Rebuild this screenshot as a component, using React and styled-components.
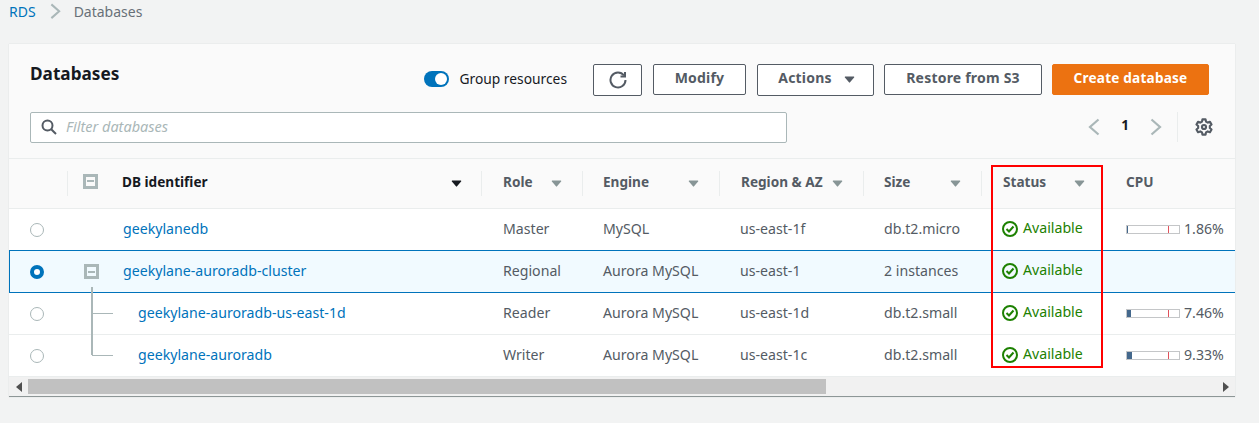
import React from "react";
import styled, { createGlobalStyle } from "styled-components";
import { IoCaretDown } from "react-icons/io5";

const GlobalStyle = createGlobalStyle`
  html, body {
    margin: 0;
    padding: 0;
    background: #f2f3f3;
    font-family: "Noto Sans", "Open Sans", sans-serif;
    font-size: 14px;
    color: #545b64;
  }
`;

const columns = "58px 414px 101px 137px 144px 118px 124px 130px";

const rows = [
  { name: "geekylanedb", role: "Master", engine: "MySQL", region: "us-east-1f", size: "db.t2.micro", cpu: 1.86 },
  { name: "geekylane-auroradb-cluster", role: "Regional", engine: "Aurora MySQL", region: "us-east-1", size: "2 instances", selected: true, parent: true },
  { name: "geekylane-auroradb-us-east-1d", role: "Reader", engine: "Aurora MySQL", region: "us-east-1d", size: "db.t2.small", cpu: 7.46, child: "mid" },
  { name: "geekylane-auroradb", role: "Writer", engine: "Aurora MySQL", region: "us-east-1c", size: "db.t2.small", cpu: 9.33, child: "last" },
];

const Page = styled.div`
  position: relative;
  width: 1259px;
  height: 423px;
  overflow: hidden;
`;

const Breadcrumbs = styled.nav`
  display: flex;
  align-items: center;
  height: 23px;
  padding-left: 9px;
  margin-bottom: 21px;
  font-size: 14px;
  color: #687078;
`;

const Crumb = styled.a`
  color: #0073bb;
`;

const CrumbSeparator = styled.span`
  display: flex;
  margin: 0 13px 0 14px;
`;

const Card = styled.section`
  width: 1226px;
  margin-left: 9px;
  background: #fafafa;
  border-bottom: 1px solid #8d9696;
  box-shadow: 0 0 1px #c8cccc;
`;

const CardHeader = styled.div`
  height: 115px;
  box-sizing: border-box;
  padding: 20px 26px 0 21px;
  border-bottom: 1px solid #eaeded;
`;

const Toolbar = styled.div`
  display: flex;
  align-items: flex-start;
  height: 47px;
`;

const Title = styled.h1`
  flex: 1;
  margin: 0;
  font-size: 17.2px;
  line-height: 20px;
  font-weight: 700;
  color: #16191f;
`;

const ToggleGroup = styled.div`
  display: flex;
  align-items: center;
  height: 28px;
  margin-right: 26px;
  font-size: 13.8px;
  color: #16191f;
`;

const Toggle = styled.span`
  position: relative;
  width: 25px;
  height: 16px;
  margin: 2px 10px 0 0;
  border-radius: 8px;
  background: #0073bb;

  &::after {
    content: "";
    position: absolute;
    right: 2px;
    top: 2px;
    width: 12px;
    height: 12px;
    border-radius: 50%;
    background: #fff;
  }
`;

const Button = styled.button`
  display: flex;
  align-items: center;
  justify-content: center;
  gap: 10px;
  height: ${(p) => (p.$tall ? 32 : 31)}px;
  width: ${(p) => p.$width}px;
  margin-left: ${(p) => p.$gap ?? 11}px;
  padding: 0 0 5px ${(p) => p.$pl ?? 0}px;
  box-sizing: border-box;
  border: 1px solid ${(p) => (p.$primary ? "#ec7211" : "#545b64")};
  border-radius: 2px;
  background: ${(p) => (p.$primary ? "#ec7211" : "#fff")};
  color: ${(p) => (p.$primary ? "#fff" : "#545b64")};
  font-family: inherit;
  font-size: ${(p) => (p.$primary ? 13.6 : 14)}px;
  font-weight: 700;
  letter-spacing: 0.2px;
`;

const RefreshButton = styled(Button)`
  padding: 0;
`;

const FilterRow = styled.div`
  display: flex;
  align-items: center;
  height: 32px;
`;

const FilterBox = styled.div`
  display: flex;
  align-items: center;
  width: 757px;
  height: 31px;
  box-sizing: border-box;
  padding: 0 0 3px 10px;
  border: 1px solid #aab7b8;
  border-radius: 2px;
  background: #fff;
  font-size: 14.5px;
  font-style: italic;
  color: #aab7b8;
  gap: 9px;

  svg {
    margin-top: 3px;
  }
`;

const Pager = styled.div`
  display: flex;
  align-items: center;
  margin: 0 -4px 0 auto;
  height: 32px;
  font-size: 13.5px;
  font-weight: 700;
  color: #16191f;
`;

const PageNumber = styled.span`
  width: 50px;
  padding-bottom: 5px;
  text-align: center;
`;

const PagerDivider = styled.span`
  width: 1px;
  height: 30px;
  margin: 0 17px 0 15px;
  background: #eaeded;
`;

const HeadRow = styled.div`
  display: grid;
  grid-template-columns: ${columns};
  height: 49px;
  border-bottom: 1px solid #eaeded;
  align-items: center;
`;

const HeadCell = styled.div`
  display: flex;
  align-items: center;
  justify-content: space-between;
  height: 25px;
  box-sizing: border-box;
  padding: 0 ${(p) => p.$pr ?? 18}px 5px ${(p) => p.$pl ?? 20}px;
  border-left: ${(p) => (p.$plain ? "none" : "1px solid #eaeded")};
  font-size: 13.6px;
  font-weight: 700;
  color: ${(p) => (p.$active ? "#16191f" : "#545b64")};
`;

const HeadLabel = styled.span`
  display: flex;
  align-items: center;
`;

const CaretSlot = styled.span`
  display: flex;
  margin-top: 4px;
`;

const Row = styled.div`
  display: grid;
  grid-template-columns: ${columns};
  align-items: center;
  height: 41px;
  box-sizing: content-box;
  background: ${(p) => (p.$selected ? "#f1faff" : "#fff")};
  border-bottom: 1px solid ${(p) => (p.$selected ? "#0073bb" : "#eaeded")};
  box-shadow: ${(p) => (p.$selected ? "0 -1px 0 #0073bb, inset 1px 0 0 #0073bb" : "none")};
  position: relative;
  font-size: 14.15px;
  color: #545b64;
`;

const RadioCell = styled.div`
  display: flex;
  padding-left: 21px;
`;

const Radio = styled.span`
  width: 14px;
  height: 14px;
  box-sizing: border-box;
  border-radius: 50%;
  background: #fff;
  border: ${(p) => (p.$on ? "4px solid #0073bb" : "1px solid #aab7b8")};
`;

const NameCell = styled.div`
  position: relative;
  display: flex;
  align-items: center;
  height: 100%;
  padding: 0 0 2px ${(p) => (p.$child ? 71 : 56)}px;
  box-sizing: border-box;
  color: #0073bb;
`;

const Expander = styled.span`
  position: absolute;
  left: 17px;
  top: 13px;
  width: 15px;
  height: 15px;
  box-sizing: border-box;
  border: 3px solid #aab7b8;
  display: flex;
  align-items: center;
  justify-content: center;
  background: #f1faff;

  &::before {
    content: "";
    width: 7px;
    height: 2px;
    background: #aab7b8;
  }
`;

const HeadExpander = styled(Expander)`
  position: static;
  background: #fafafa;
  margin-right: 24px;
`;

const TreeStem = styled.span`
  position: absolute;
  left: 24px;
  top: ${(p) => (p.$last ? -1 : -6)}px;
  height: ${(p) => (p.$last ? 21 : 47)}px;
  width: 2px;
  background: #aab7b8;
`;

const TreeBranch = styled.span`
  position: absolute;
  left: 25px;
  top: 20px;
  width: 21px;
  height: 1px;
  background: #aab7b8;
`;

const Cell = styled.div`
  padding: 0 0 2px ${(p) => p.$pl ?? 21}px;
  white-space: nowrap;
`;

const StatusCell = styled(Cell)`
  display: flex;
  align-items: center;
  gap: 5px;
  padding-bottom: 4px;
  color: #1d8102;
`;

const CpuCell = styled(Cell)`
  display: flex;
  align-items: center;
  gap: 4px;
`;

const CpuBar = styled.span`
  position: relative;
  width: 52px;
  height: 7px;
  margin-top: 2px;
  border: 1px solid #c4c6c8;
  background: #fff;

  &::after {
    content: "";
    position: absolute;
    left: 41px;
    top: 0;
    width: 1px;
    height: 7px;
    background: #e0525c;
  }
`;

const CpuFill = styled.span`
  display: block;
  height: 100%;
  background: #44688c;
`;

const Scrollbar = styled.div`
  display: flex;
  align-items: center;
  height: 19px;
  background: #f1f1f1;
`;

const ScrollArrow = styled.span`
  display: flex;
  justify-content: center;
  width: 19px;
`;

const ScrollThumb = styled.span`
  width: 798px;
  height: 15px;
  background: #c1c1c1;
  margin-right: auto;
`;

const Highlight = styled.div`
  position: absolute;
  left: 991px;
  top: 165px;
  width: 112px;
  height: 203px;
  box-sizing: border-box;
  border: 2px solid #f00;
  pointer-events: none;
`;

const Chevron = ({ dir, color, size = 12 }) => (
  <svg width={size} height={size * 1.5} viewBox="0 0 12 18" fill="none" stroke={color} strokeWidth="2.2">
    <path d={dir === "left" ? "M10.5 1.5 L2 9 L10.5 16.5" : "M1.5 1.5 L10 9 L1.5 16.5"} />
  </svg>
);

const SearchIcon = () => (
  <svg width="16" height="16" viewBox="0 0 16 16" fill="none" stroke="#545b64" strokeWidth="2">
    <circle cx="6.5" cy="6.5" r="5" />
    <path d="M10.2 10.2 L15 15" />
  </svg>
);

const RefreshIcon = () => (
  <svg width="18" height="18" viewBox="0 0 18 18" fill="none" stroke="#545b64" strokeWidth="2">
    <path d="M15 4.5 A7.5 7.5 0 1 0 16.5 9" />
    <path d="M16 1 V5.5 H11.5" />
  </svg>
);

const GearIcon = () => (
  <svg width="18" height="18" viewBox="0 0 16 16" fill="none" stroke="#545b64" strokeWidth="1.9" strokeLinejoin="round">
    <path d="M6.6 1.2 h2.8 l.4 2 1.5.9 2-.7 1.4 2.4-1.5 1.3 v1.8 l1.5 1.3-1.4 2.4-2-.7-1.5.9-.4 2 h-2.8 l-.4-2-1.5-.9-2 .7-1.4-2.4 1.5-1.3 v-1.8 l-1.5-1.3 1.4-2.4 2 .7 1.5-.9z" />
    <circle cx="8" cy="8" r="1.8" />
  </svg>
);

const CheckIcon = () => (
  <svg width="16" height="16" viewBox="0 0 16 16" fill="none" stroke="#1d8102" strokeWidth="2" style={{ marginTop: 3 }}>
    <circle cx="8" cy="8" r="7" />
    <path d="M4.5 8 L7 10.5 L11.5 5.5" />
  </svg>
);

const ArrowLeft = () => (
  <svg width="6" height="10" viewBox="0 0 6 10" fill="#505050">
    <path d="M6 0 V10 L0 5z" />
  </svg>
);

const ArrowRight = () => (
  <svg width="6" height="10" viewBox="0 0 6 10" fill="#505050">
    <path d="M0 0 V10 L6 5z" />
  </svg>
);

const Caret = ({ color = "#879596" }) => (
  <CaretSlot>
    <IoCaretDown size={15} color={color} />
  </CaretSlot>
);

export default function App() {
  return (
    <Page>
      <GlobalStyle />
      <Breadcrumbs>
        <Crumb>RDS</Crumb>
        <CrumbSeparator>
          <Chevron dir="right" color="#aab7b8" size={11} />
        </CrumbSeparator>
        Databases
      </Breadcrumbs>
      <Card>
        <CardHeader>
          <Toolbar>
            <Title>Databases</Title>
            <ToggleGroup>
              <Toggle />
              Group resources
            </ToggleGroup>
            <RefreshButton $width={49} $tall $gap={0}>
              <RefreshIcon />
            </RefreshButton>
            <Button $width={93}>Modify</Button>
            <Button $width={117} $tall $pl={4}>
              Actions
              <Caret color="#545b64" />
            </Button>
            <Button $width={158} $gap={10}>Restore from S3</Button>
            <Button $width={157} $gap={10} $primary>Create database</Button>
          </Toolbar>
          <FilterRow>
            <FilterBox>
              <SearchIcon />
              Filter databases
            </FilterBox>
            <Pager>
              <Chevron dir="left" color="#aab7b8" />
              <PageNumber>1</PageNumber>
              <Chevron dir="right" color="#aab7b8" />
              <PagerDivider />
              <GearIcon />
            </Pager>
          </FilterRow>
        </CardHeader>
        <HeadRow>
          <div />
          <HeadCell $active $pl={15} $pr={17}>
            <HeadLabel>
              <HeadExpander />
              DB identifier
            </HeadLabel>
            <Caret color="#16191f" />
          </HeadCell>
          <HeadCell $pl={21}>Role<Caret /></HeadCell>
          <HeadCell>Engine<Caret /></HeadCell>
          <HeadCell $pl={21}>Region &amp; AZ<Caret /></HeadCell>
          <HeadCell>Size<Caret /></HeadCell>
          <HeadCell $pl={21}>Status<Caret /></HeadCell>
          <HeadCell $plain $pl={21}>CPU</HeadCell>
        </HeadRow>
        {rows.map((r) => (
          <Row key={r.name} $selected={r.selected}>
            <RadioCell>
              <Radio $on={r.selected} />
            </RadioCell>
            <NameCell $child={!!r.child}>
              {r.parent && <Expander />}
              {r.child && <TreeStem $last={r.child === "last"} />}
              {r.child && <TreeBranch />}
              {r.name}
            </NameCell>
            <Cell $pl={22}>{r.role}</Cell>
            <Cell>{r.engine}</Cell>
            <Cell>{r.region}</Cell>
            <Cell>{r.size}</Cell>
            <StatusCell>
              <CheckIcon />
              Available
            </StatusCell>
            {r.cpu ? (
              <CpuCell>
                <CpuBar>
                  <CpuFill style={{ width: `${r.cpu}%` }} />
                </CpuBar>
                {r.cpu}%
              </CpuCell>
            ) : (
              <div />
            )}
          </Row>
        ))}
        <Scrollbar>
          <ScrollArrow><ArrowLeft /></ScrollArrow>
          <ScrollThumb />
          <ScrollArrow><ArrowRight /></ScrollArrow>
        </Scrollbar>
      </Card>
      <Highlight />
    </Page>
  );
}
